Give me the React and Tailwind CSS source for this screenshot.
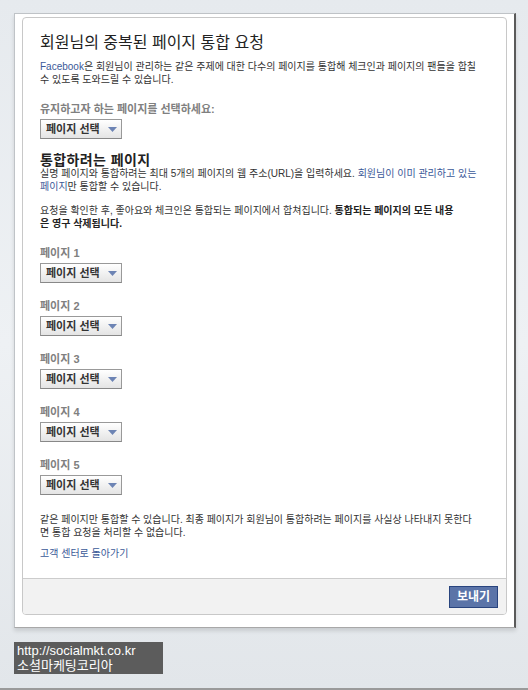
import { Fragment } from "react"

const font = "font-['Liberation_Sans','Noto_Sans_CJK_KR',sans-serif]"

const PageSelect = () => (
  <button className="flex h-[20px] w-[82px] items-center border border-[#999] border-b-[#888] bg-gradient-to-b from-white to-[#e4e4e4] pl-[5px] text-[11px] font-bold text-[#333]">
    <span>페이지 선택</span>
    <svg width="9" height="5" viewBox="0 0 9 5" className="ml-[8px]">
      <path d="M0 0h9L4.5 5z" fill="#6d84b4" />
    </svg>
  </button>
)

const Label = ({ children, className = "" }) => (
  <div className={`text-[11px] font-bold leading-[13px] text-[#808080] ${className}`}>
    {children}
  </div>
)

export default function App() {
  return (
    <div className={`${font} h-[690px] w-[528px] overflow-hidden border-b-[2px] border-b-[#9a9a9a] bg-gradient-to-b from-[#e6eaee] via-[#eef1f4] to-[#e2e6ea] px-[14px] pt-[13px]`}>
      {/* Frame */}
      <div className="w-[502px] border border-[#bfc3c7] border-r-2 border-r-[#5a5a5a] border-b-[#a8a8a8] bg-white px-[7px] pb-[12px] pt-[3px] shadow-[0_3px_4px_rgba(0,0,0,0.12)]">
        {/* Card */}
        <div className="overflow-hidden rounded-[4px] border border-[#c8c8c8] bg-white">
          <div className="px-[17px] pb-[18px] pt-[16px] text-[#333]">
            <h2 className="text-[16px] leading-[18px] text-[#222]">
              회원님의 중복된 페이지 통합 요청
            </h2>

            <p className="mt-[8px] whitespace-nowrap text-[10px] leading-[13px]">
              <span className="text-[#3b5998]">Facebook</span>은 회원님이 관리하는 같은 주제에 대한 다수의 페이지를 통합해 체크인과 페이지의 팬들을 합칠
              <br />
              수 있도록 도와드릴 수 있습니다.
            </p>

            <Label className="mt-[17px]">유지하고자 하는 페이지를 선택하세요:</Label>
            <div className="mt-[3px]">
              <PageSelect />
            </div>

            <h3 className="mt-[14px] text-[14px] font-bold leading-[14px] tracking-[0.4px] text-[#222]">
              통합하려는 페이지
            </h3>
            <p className="whitespace-nowrap text-[10px] leading-[13px]">
              실명 페이지와 통합하려는 최대 5개의 페이지의 웹 주소(URL)을 입력하세요.{" "}
              <span className="text-[#3b5998]">회원님이 이미 관리하고 있는</span>
              <br />
              <span className="text-[#3b5998]">페이지</span>만 통합할 수 있습니다.
            </p>

            <p className="mt-[11px] whitespace-nowrap text-[10px] leading-[13px]">
              요청을 확인한 후, 좋아요와 체크인은 통합되는 페이지에서 합쳐집니다.{" "}
              <span className="font-bold text-[#222]">통합되는 페이지의 모든 내용</span>
              <br />
              <span className="font-bold text-[#222]">은 영구 삭제됩니다.</span>
            </p>

            {[1, 2, 3, 4, 5].map((n) => (
              <Fragment key={n}>
                <Label className="mt-[17px]">페이지 {n}</Label>
                <div className="mt-[3px]">
                  <PageSelect />
                </div>
              </Fragment>
            ))}

            <p className="mt-[18px] whitespace-nowrap text-[10px] leading-[13px]">
              같은 페이지만 통합할 수 있습니다. 최종 페이지가 회원님이 통합하려는 페이지를 사실상 나타내지 못한다
              <br />
              면 통합 요청을 처리할 수 없습니다.
            </p>

            <a className="mt-[8px] block text-[10px] leading-[13px] text-[#3b5998]">
              고객 센터로 돌아가기
            </a>
          </div>

          {/* Footer */}
          <div className="flex justify-end border-t border-[#ccc] bg-[#f2f2f2] px-[8px] pb-[6px] pt-[7px]">
            <button className="h-[22px] w-[49px] border border-[#29447e] bg-[#5b74a8] text-[12px] font-bold text-white">
              보내기
            </button>
          </div>
        </div>
      </div>

      {/* Watermark */}
      <div className="mt-[14px] w-[149px] bg-[#5c5c5c] px-[3px] py-[1px] text-[13px] leading-[15px] text-white">
        <div>http://socialmkt.co.kr</div>
        <div>소셜마케팅코리아</div>
      </div>
    </div>
  )
}
